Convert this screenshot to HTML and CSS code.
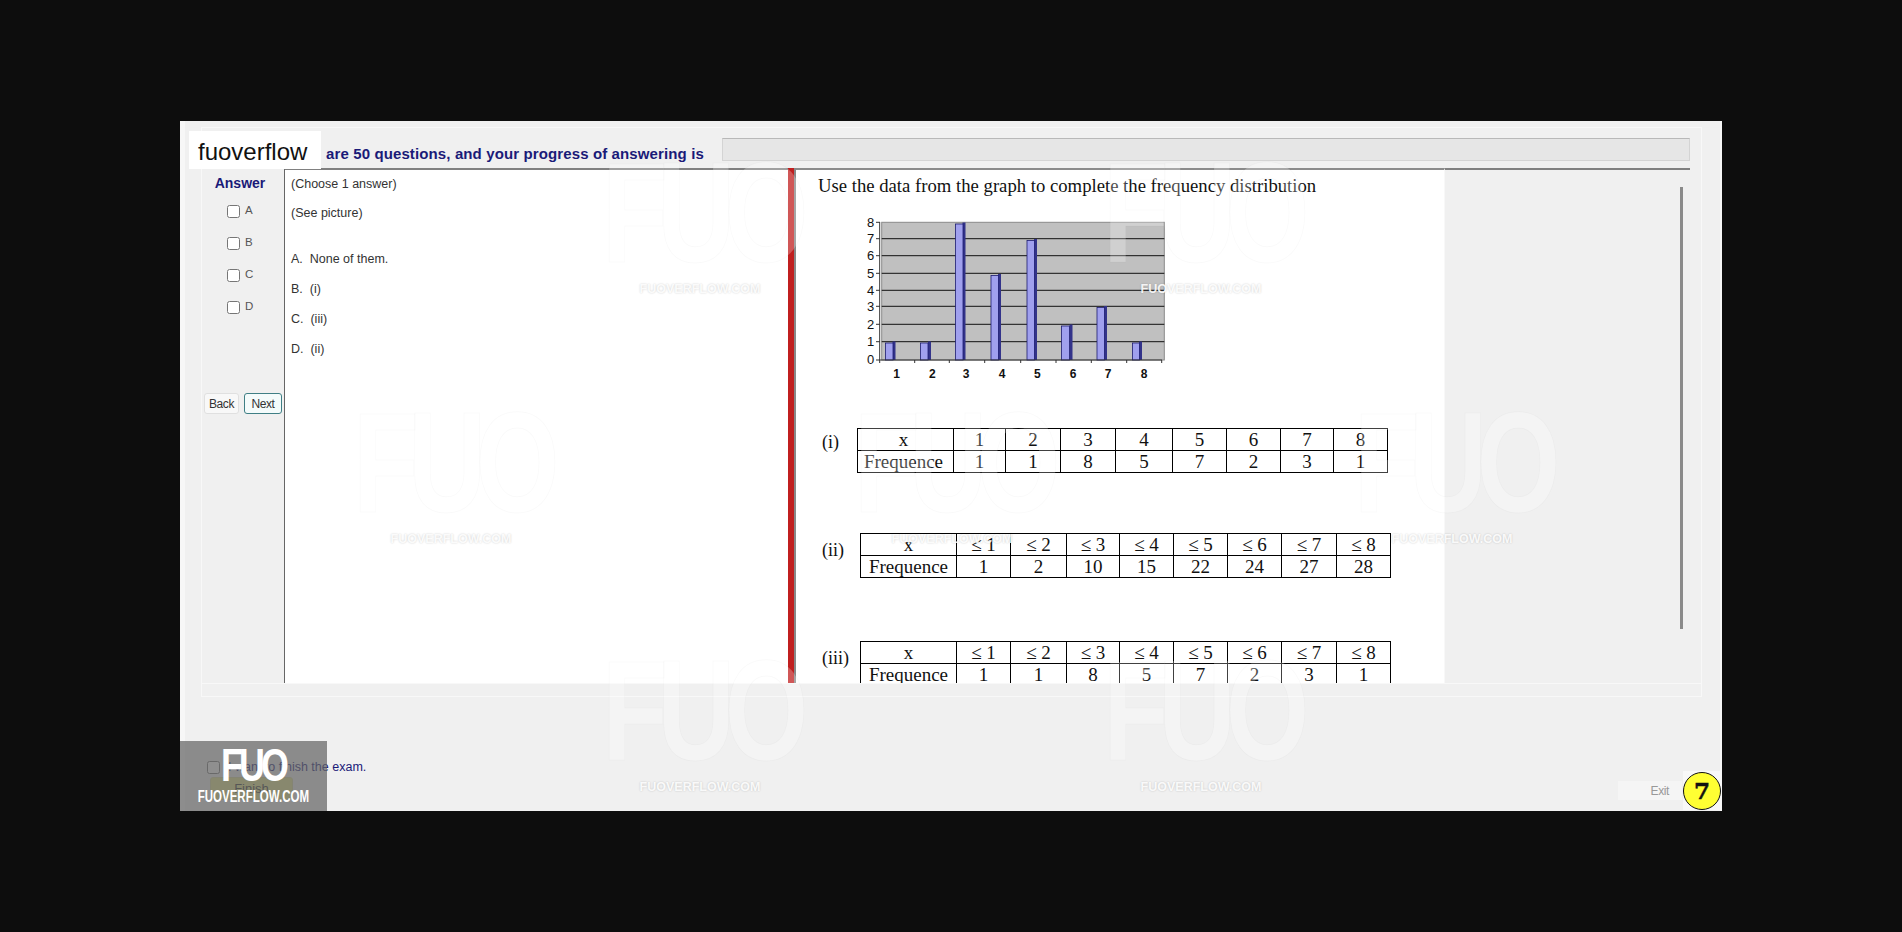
FILE: index.html
```html
<!DOCTYPE html>
<html lang="en">
<head>
    <meta charset="UTF-8">
    <meta name="viewport" content="width=device-width, initial-scale=1.0">
    <title>Exam client</title>
    <link rel="stylesheet" href="styles.css">
</head>
<body>
    <div class="window">
        <div class="frame">
            <div class="progress-row">
                <span class="progress-text">are 50 questions, and your progress of answering is</span>
                <div class="progress-bar"></div>
            </div>
            <div class="content">
                <div class="answers">
                    <div class="answers-title">Answer</div>
                    <label class="choice"><input type="checkbox"><span>A</span></label>
                    <label class="choice"><input type="checkbox"><span>B</span></label>
                    <label class="choice"><input type="checkbox"><span>C</span></label>
                    <label class="choice"><input type="checkbox"><span>D</span></label>
                    <div class="nav-buttons">
                        <button class="nav-btn">Back</button>
                        <button class="nav-btn nav-next">Next</button>
                    </div>
                </div>
                <div class="question">
                    <p class="q-line">(Choose 1 answer)</p>
                    <p class="q-line q-see">(See picture)</p>
                    <p class="q-line q-first">A.&nbsp; None of them.</p>
                    <p class="q-line q-opt">B.&nbsp; (i)</p>
                    <p class="q-line q-opt">C.&nbsp; (iii)</p>
                    <p class="q-line q-opt">D.&nbsp; (ii)</p>
                </div>
                <div class="splitter"></div>
                <div class="picture">
                    <p class="picture-title">Use the data from the graph to complete the frequency distribution</p>
                    <svg class="chart" width="310" height="170" viewBox="0 0 310 170">
                        <rect class="plot" x="21.7" y="7.3" width="282.6" height="137.7"/>
                        <g class="grid">
                            <line x1="21.7" x2="304.3" y1="23.7" y2="23.7"/>
                            <line x1="21.7" x2="304.3" y1="40.7" y2="40.7"/>
                            <line x1="21.7" x2="304.3" y1="58.3" y2="58.3"/>
                            <line x1="21.7" x2="304.3" y1="75.3" y2="75.3"/>
                            <line x1="21.7" x2="304.3" y1="91.3" y2="91.3"/>
                            <line x1="21.7" x2="304.3" y1="109.3" y2="109.3"/>
                            <line x1="21.7" x2="304.3" y1="126.7" y2="126.7"/>
                        </g>
                        <g class="bars">
                            <rect class="bar-side" x="32.5" y="126.5" width="3" height="18.5"/><rect class="bar-front" x="25.5" y="128" width="7.5" height="17"/>
                            <rect class="bar-side" x="68" y="126.5" width="3" height="18.5"/><rect class="bar-front" x="60.5" y="128" width="7.5" height="17"/>
                            <rect class="bar-side" x="102.5" y="7.5" width="3" height="137.5"/><rect class="bar-front" x="95.5" y="9" width="7.5" height="136"/>
                            <rect class="bar-side" x="138" y="59" width="3" height="86"/><rect class="bar-front" x="131" y="60.5" width="7.5" height="84.5"/>
                            <rect class="bar-side" x="174" y="24" width="3" height="121"/><rect class="bar-front" x="167" y="25.5" width="7.5" height="119.5"/>
                            <rect class="bar-side" x="209.5" y="109.5" width="3" height="35.5"/><rect class="bar-front" x="201.5" y="111" width="8" height="34"/>
                            <rect class="bar-side" x="244" y="91" width="3" height="54"/><rect class="bar-front" x="237" y="92.5" width="7.5" height="52.5"/>
                            <rect class="bar-side" x="279" y="126.5" width="3" height="18.5"/><rect class="bar-front" x="272.5" y="128" width="7" height="17"/>
                        </g>
                        <g class="axis">
                            <line x1="19.7" x2="19.7" y1="7" y2="145"/>
                            <line x1="19.7" x2="302" y1="145" y2="145"/>
                            <line x1="16" x2="20" y1="7.3" y2="7.3"/>
                            <line x1="16" x2="20" y1="23.7" y2="23.7"/>
                            <line x1="16" x2="20" y1="40.7" y2="40.7"/>
                            <line x1="16" x2="20" y1="58.3" y2="58.3"/>
                            <line x1="16" x2="20" y1="75.3" y2="75.3"/>
                            <line x1="16" x2="20" y1="91.3" y2="91.3"/>
                            <line x1="16" x2="20" y1="109.3" y2="109.3"/>
                            <line x1="16" x2="20" y1="126.7" y2="126.7"/>
                            <line x1="16" x2="20" y1="145" y2="145"/>
                            <line x1="19.7" x2="19.7" y1="145" y2="148"/>
                            <line x1="54.7" x2="54.7" y1="145" y2="148"/>
                            <line x1="89.3" x2="89.3" y1="145" y2="148"/>
                            <line x1="124.7" x2="124.7" y1="145" y2="148"/>
                            <line x1="160.7" x2="160.7" y1="145" y2="148"/>
                            <line x1="196" x2="196" y1="145" y2="148"/>
                            <line x1="231.3" x2="231.3" y1="145" y2="148"/>
                            <line x1="266.7" x2="266.7" y1="145" y2="148"/>
                            <line x1="301.7" x2="301.7" y1="145" y2="148"/>
                        </g>
                        <g class="y-labels">
                            <text x="10.7" y="12">8</text>
                            <text x="10.7" y="28">7</text>
                            <text x="10.7" y="45">6</text>
                            <text x="10.7" y="63">5</text>
                            <text x="10.7" y="80">4</text>
                            <text x="10.7" y="96">3</text>
                            <text x="10.7" y="114">2</text>
                            <text x="10.7" y="131">1</text>
                            <text x="10.7" y="149">0</text>
                        </g>
                        <g class="x-labels">
                            <text x="36.7" y="163">1</text>
                            <text x="72.3" y="163">2</text>
                            <text x="106" y="163">3</text>
                            <text x="142" y="163">4</text>
                            <text x="177.3" y="163">5</text>
                            <text x="213" y="163">6</text>
                            <text x="248" y="163">7</text>
                            <text x="284" y="163">8</text>
                        </g>
                    </svg>

                    <div class="option-row row-i">
                        <span class="option-label">(i)</span>
                        <table class="freq freq-i">
                            <colgroup><col><col><col><col><col><col><col><col><col></colgroup>
                            <tr><td>x</td><td>1</td><td>2</td><td>3</td><td>4</td><td>5</td><td>6</td><td>7</td><td>8</td></tr>
                            <tr><td>Frequence</td><td>1</td><td>1</td><td>8</td><td>5</td><td>7</td><td>2</td><td>3</td><td>1</td></tr>
                        </table>
                    </div>
                    <div class="option-row row-ii">
                        <span class="option-label">(ii)</span>
                        <table class="freq freq-ii">
                            <colgroup><col><col><col><col><col><col><col><col><col></colgroup>
                            <tr><td>x</td><td>≤ 1</td><td>≤ 2</td><td>≤ 3</td><td>≤ 4</td><td>≤ 5</td><td>≤ 6</td><td>≤ 7</td><td>≤ 8</td></tr>
                            <tr><td>Frequence</td><td>1</td><td>2</td><td>10</td><td>15</td><td>22</td><td>24</td><td>27</td><td>28</td></tr>
                        </table>
                    </div>
                    <div class="option-row row-iii">
                        <span class="option-label">(iii)</span>
                        <table class="freq freq-ii">
                            <colgroup><col><col><col><col><col><col><col><col><col></colgroup>
                            <tr><td>x</td><td>≤ 1</td><td>≤ 2</td><td>≤ 3</td><td>≤ 4</td><td>≤ 5</td><td>≤ 6</td><td>≤ 7</td><td>≤ 8</td></tr>
                            <tr><td>Frequence</td><td>1</td><td>1</td><td>8</td><td>5</td><td>7</td><td>2</td><td>3</td><td>1</td></tr>
                        </table>
                    </div>
                </div>
                <div class="side-pane"><div class="scroll-line"></div></div>
            </div>
        </div>

        <div class="footer">
            <div class="finish">
                <label class="finish-check"><input type="checkbox"><span>I want to finish the exam.</span></label>
                <button class="finish-btn">Finish</button>
            </div>
            <div class="exit-group">
                <button class="exit-btn">Exit</button>
                <div class="badge-wrap"><div class="badge">7</div></div>
            </div>
        </div>

        <!-- overlays: site label, watermarks and corner logo -->
        <div class="site-label">fuoverflow</div>

        <div class="mark m1"><div class="mark-logo"><span>FUO</span></div><div class="mark-url">FUOVERFLOW.COM</div></div>
        <div class="mark m2"><div class="mark-logo"><span>FUO</span></div><div class="mark-url">FUOVERFLOW.COM</div></div>
        <div class="mark m3"><div class="mark-logo"><span>FUO</span></div><div class="mark-url">FUOVERFLOW.COM</div></div>
        <div class="mark m4"><div class="mark-logo"><span>FUO</span></div><div class="mark-url">FUOVERFLOW.COM</div></div>
        <div class="mark m5"><div class="mark-logo"><span>FUO</span></div><div class="mark-url">FUOVERFLOW.COM</div></div>
        <div class="mark m6"><div class="mark-logo"><span>FUO</span></div><div class="mark-url">FUOVERFLOW.COM</div></div>
        <div class="mark m7"><div class="mark-logo"><span>FUO</span></div><div class="mark-url">FUOVERFLOW.COM</div></div>

        <div class="corner-logo">
            <div class="corner-fuo"><span>FUO</span></div>
            <div class="corner-url"><span>FUOVERFLOW.COM</span></div>
        </div>
    </div>
</body>
</html>
```

FILE: styles.css
```css
* {
    box-sizing: border-box;
}
body {
    margin: 0;
    height: 932px;
    overflow: hidden;
    background-color: #0d0d0d;
    padding: 121px 180px 0;
    font-family: "Liberation Sans", Arial, sans-serif;
}
.window {
    position: relative;
    width: 1542px;
    height: 690px;
    background-color: #f0f0f0;
    box-shadow: inset 5px 0 #f7f7f7, inset -2px 0 #f7f7f7;
    overflow: hidden;
    padding-top: 6px;
}

/* top group */
.frame {
    margin: 0 20px 0 21px;
    height: 570px;
    border: 1px solid #f8f8f8;
    padding-top: 10px;
}
.progress-row {
    display: flex;
    align-items: center;
    height: 23px;
}
.progress-text {
    margin-left: 124px;
    padding-top: 7px;
    width: 396px;
    font-size: 15px;
    letter-spacing: .12px;
    font-weight: bold;
    color: #1a1a78;
    white-space: nowrap;
}
.progress-bar {
    width: 968px;
    height: 23px;
    background-color: #e6e6e6;
    border: 1px solid #d4d4d4;
    border-top-color: #b8b8b8;
}
.content {
    display: flex;
    height: 516px;
    margin-top: 7px;
    border-bottom: 1px solid #f8f8f8;
}
.answers {
    width: 82px;
    height: 100%;
    font-size: 11.5px;
    color: #555;
}
.answers-title {
    margin: 7px 0 4px;
    text-align: center;
    padding-right: 6px;
    font-size: 14px;
    line-height: 16px;
    font-weight: bold;
    color: #1a1a78;
}
.choice {
    display: flex;
    align-items: center;
    height: 32px;
    padding-left: 25px;
}
.choice input {
    width: 13px;
    height: 13px;
    margin: 0 5px 0 0;
}
.choice span {
    margin-top: -2px;
}
.nav-buttons {
    display: flex;
    gap: 5px;
    margin: 70px 0 0 2px;
}
.nav-btn {
    width: 35px;
    height: 21px;
    padding: 0;
    background-color: #f8f8f8;
    border: 1px solid #e0e0e0;
    border-radius: 3px;
    font-family: inherit;
    font-size: 12px;
    letter-spacing: -.4px;
    color: #333;
}
.nav-next {
    width: 38px;
    border-color: #3f7f85;
    background-color: #f4fbfb;
}
.question {
    width: 504px;
    background-color: #fff;
    border-top: 2px solid #808080;
    border-left: 1px solid #666;
    padding: 6px 0 0 6px;
    font-size: 12.5px;
    color: #333;
}
.q-line {
    margin: 0;
    line-height: 16px;
}
.q-see {
    margin-top: 13px;
}
.q-first {
    margin-top: 30px;
}
.q-opt {
    margin-top: 14px;
}
.splitter {
    width: 8px;
    background-color: #c01f1f;
    border-right: 2px solid #888;
}
.picture {
    width: 648px;
    background-color: #fff;
    border-top: 2px solid #8a8a8a;
    padding: 5px 0 0 22px;
    overflow: hidden;
    font-family: "Liberation Serif", "Times New Roman", serif;
    color: #111;
}
.picture-title {
    margin: 0;
    font-size: 18.7px;
    line-height: 22px;
    white-space: nowrap;
}
.chart {
    display: block;
    margin: 18px 0 0 42px;
}
.plot {
    fill: #c0c0c0;
    stroke: #8a8a8a;
    stroke-width: 1;
}
.grid line {
    stroke: #111;
    stroke-width: 1;
}
.bar-front {
    fill: #a0a0ee;
    stroke: #1c1c70;
    stroke-width: .8;
}
.bar-side {
    fill: #33338a;
}
.axis line {
    stroke: #333;
    stroke-width: 1;
}
.y-labels text, .x-labels text {
    font-family: "Liberation Sans", Arial, sans-serif;
    font-size: 13px;
    fill: #111;
    text-anchor: middle;
}
.x-labels text {
    font-size: 12px;
    font-weight: bold;
}
.option-row {
    display: flex;
    margin-left: 4px;
}
.row-i {
    margin-top: 43px;
}
.row-ii {
    margin-top: 60px;
}
.row-iii {
    margin-top: 63px;
}
.option-label {
    width: 38px;
    font-size: 18px;
    line-height: 26px;
    padding-top: 1px;
}
.row-i .option-label {
    width: 35px;
}
.row-ii .option-label, .row-iii .option-label {
    padding-top: 4px;
}
.freq {
    border-collapse: collapse;
    table-layout: fixed;
    width: 530px;
    font-size: 19px;
}
.freq td {
    height: 22px;
    padding: 0;
    border: 1px solid #000;
    text-align: center;
    line-height: 20px;
}
.freq-i td:first-child {
    padding-right: 4px;
}
.freq col {
    width: 54px;
}
.freq col:first-child {
    width: 96px;
}
.freq-i col:nth-child(2) { width: 52px; }
.freq-i col:nth-child(3), .freq-i col:nth-child(4) { width: 55px; }
.freq-i col:nth-child(5) { width: 57px; }
.freq-i col:nth-child(8) { width: 53px; }
.freq-ii col:nth-child(3) { width: 56px; }
.freq-ii col:nth-child(4) { width: 53px; }
.freq-ii col:nth-child(8) { width: 55px; }
.side-pane {
    position: relative;
    flex: 1;
    margin-right: 11px;
    border-top: 2px solid #808080;
    border-left: 1px solid #f8f8f8;
}
.scroll-line {
    position: absolute;
    left: 235px;
    top: 17px;
    width: 3px;
    height: 442px;
    background-color: #8a8a8a;
}

/* footer */
.footer {
    display: flex;
    justify-content: space-between;
    padding: 0 1px 0 27px;
    height: 114px;
}
.finish {
    padding-top: 63px;
}
.finish-check {
    display: flex;
    align-items: center;
    font-size: 12.5px;
    color: #1a1a78;
}
.finish-check input {
    width: 13px;
    height: 13px;
    margin: 0 8px 0 0;
}
.finish-btn {
    display: block;
    margin: 3px 0 0 3px;
    width: 83px;
    height: 23px;
    padding: 0;
    background-color: #e6e68a;
    border: 1px solid #d8d89a;
    border-radius: 3px;
    font-family: inherit;
    font-size: 13px;
    color: #333;
}
.exit-group {
    display: flex;
    align-items: flex-end;
}
.exit-btn {
    width: 66px;
    height: 21px;
    margin-bottom: 10px;
    padding: 0 13px 0 0;
    background-color: #f5f5f5;
    border: 1px solid #f0f0f0;
    font-family: inherit;
    font-size: 12px;
    text-align: right;
    letter-spacing: -.4px;
    color: #999;
}
.badge-wrap {
    width: 38px;
    height: 39px;
    display: flex;
    align-items: center;
    justify-content: center;
    background-color: #f8f8f8;
    margin-bottom: 1px;
}
.badge {
    width: 38px;
    height: 38px;
    border: 1.5px solid #111;
    border-radius: 50%;
    background-color: #ffff33;
    display: flex;
    align-items: center;
    justify-content: center;
    font-family: "DejaVu Serif", serif;
    font-size: 23px;
    font-weight: bold;
    -webkit-text-stroke: .5px #111;
    color: #111;
}

/* overlays */
.site-label {
    position: absolute;
    left: 9px;
    top: 10px;
    width: 132px;
    height: 38px;
    padding: 3px 0 0 9px;
    background-color: #fff;
    font-size: 24px;
    line-height: 35px;
    color: #111;
}
.mark {
    position: absolute;
    width: 204px;
    text-align: center;
    pointer-events: none;
}
.mark-logo {
    height: 108px;
    font-size: 142px;
    line-height: 108px;
    font-weight: bold;
    letter-spacing: -14px;
    color: rgba(255, 255, 255, .25);
    -webkit-text-stroke: 1px rgba(0, 0, 0, .025);
    white-space: nowrap;
}
.mark-logo span {
    display: inline-block;
    margin-left: -40px;
    margin-right: -40px;
    transform: scaleX(.76);
}
.mark-url {
    margin-top: 14px;
    font-size: 12.5px;
    font-weight: bold;
    line-height: 16px;
    color: rgba(255, 255, 255, .9);
    text-shadow: 0 0 2px rgba(0, 0, 0, .2);
}
.m1 { left: 418px; top: 38px; }
.m2 { left: 919px; top: 38px; }
.m3 { left: 169px; top: 288px; }
.m4 { left: 670px; top: 288px; }
.m5 { left: 1170px; top: 288px; }
.m6 { left: 418px; top: 536px; }
.m7 { left: 919px; top: 536px; }

.corner-logo {
    position: absolute;
    left: 0;
    bottom: 0;
    width: 147px;
    height: 70px;
    background-color: rgba(100, 100, 100, .72);
    color: #fff;
    text-align: center;
    font-weight: bold;
    pointer-events: none;
    overflow: hidden;
}
.corner-fuo {
    margin-top: 4px;
    height: 42px;
    font-size: 46px;
    line-height: 40px;
    letter-spacing: -5px;
}
.corner-fuo span {
    display: inline-block;
    transform: scaleX(.78);
}
.corner-url {
    font-size: 16px;
    line-height: 20px;
    white-space: nowrap;
}
.corner-url span {
    display: inline-block;
    margin: 0 -20px;
    transform: scaleX(.72);
}
```
